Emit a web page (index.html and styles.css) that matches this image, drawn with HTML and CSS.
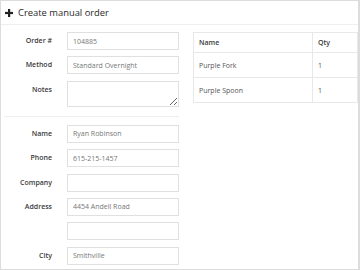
FILE: index.html
```html
<!DOCTYPE html>
<html>
<head>
<meta charset="utf-8">
<link rel="stylesheet" href="styles.css">
</head>
<body>
<div class="panel">
  <div class="panel-head">
    <svg class="plus" width="8" height="8" viewBox="0 0 8 8"><rect x="3" y="0" width="2.2" height="8" fill="#222"/><rect x="0" y="2.9" width="8" height="2.2" fill="#222"/></svg>
    <span class="title">Create manual order</span>
  </div>
  <div class="content">
    <div class="left">
      <div class="form">
        <label class="lbl">Order #</label><input class="inp" value="104885">
        <label class="lbl">Method</label><input class="inp" value="Standard Overnight">
        <label class="lbl">Notes</label><textarea class="inp area"></textarea>
      </div>
      <div class="sep"></div>
      <div class="form">
        <label class="lbl">Name</label><input class="inp" value="Ryan Robinson">
        <label class="lbl">Phone</label><input class="inp" value="615-215-1457">
        <label class="lbl">Company</label><input class="inp" value="">
        <label class="lbl">Address</label><input class="inp" value="4454 Andell Road">
        <label class="lbl"></label><input class="inp" value="">
        <label class="lbl">City</label><input class="inp" value="Smithville">
      </div>
    </div>
    <div class="right">
      <table class="items">
        <thead><tr><th class="c1">Name</th><th>Qty</th></tr></thead>
        <tbody>
          <tr><td>Purple Fork</td><td>1</td></tr>
          <tr><td>Purple Spoon</td><td>1</td></tr>
        </tbody>
      </table>
    </div>
  </div>
</div>
</body>
</html>
```
FILE: styles.css
```css
html, body { margin: 0; padding: 0; background: #fff; }
body { font-family: "Open Sans", "Liberation Sans", sans-serif; }
.panel {
  width: 360px; height: 270px; box-sizing: border-box;
  border: 1px solid #dcdcdc; border-right: 2px solid #dcdcdc;
  overflow: hidden; background: #fff;
}
.panel-head {
  height: 23px; border-bottom: 1px solid #eee;
  display: flex; align-items: center; padding-left: 4px;
}
.plus { margin-right: 5px; }
.title { font-size: 9.4px; color: #2a2a2a; }
.content { display: flex; padding-top: 7px; }
.left { width: 175px; padding-left: 3px; flex: none; }
.form {
  display: grid; grid-template-columns: 48px 112px;
  column-gap: 15px; row-gap: 6.4px;
}
.lbl {
  font-size: 7px; font-weight: 600; color: #3a3a3a; text-align: right;
  line-height: 18px; height: 18px;
}
.inp {
  box-sizing: border-box; height: 18px; width: 112px; margin: 0;
  border: 1px solid #e0e0e0; border-radius: 0; padding: 0 5px;
  font-family: "Open Sans", "Liberation Sans", sans-serif;
  font-size: 7px; color: #777; background: #fff; outline: none;
}
.area { height: 26px; resize: vertical; padding: 3px 5px; }
.sep { height: 1px; background: #eee; margin: 9px 0 8px 0; }
.right { flex: 1; margin-left: 14px; }
.items {
  width: 100%; border-collapse: collapse; font-size: 7px; color: #555;
}
.items th, .items td {
  border: 1px solid #e8e8e8; text-align: left; padding: 0 5px;
}
.items th { height: 19px; font-weight: 600; color: #3a3a3a; }
.items td { height: 24px; }
.items .c1 { width: 108px; }
```
